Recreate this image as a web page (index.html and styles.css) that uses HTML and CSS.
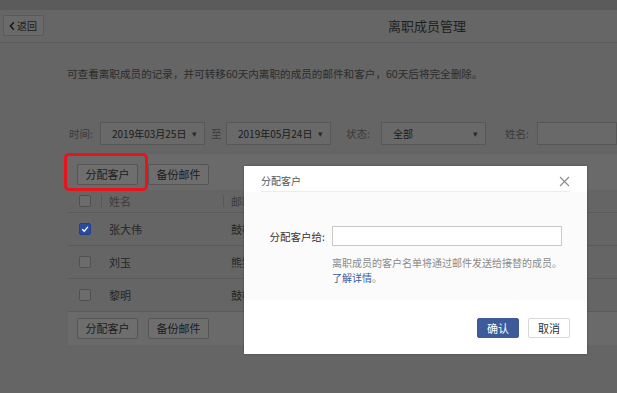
FILE: index.html
```html
<!DOCTYPE html>
<html lang="zh">
<head>
<meta charset="utf-8">
<title>离职成员管理</title>
<link rel="stylesheet" href="styles.css">
</head>
<body>
<div class="page">
  <div class="topstrip"></div>
  <header class="header">
    <button class="back"><svg class="chev" viewBox="0 0 6 10" width="6" height="10"><path d="M4.8 1.2 1.5 5 4.8 8.8" fill="none" stroke="#1a1a1a" stroke-width="1.6"/></svg>返回</button>
    <h1 class="title">离职成员管理</h1>
  </header>
  <main class="content">
    <p class="desc">可查看离职成员的记录，并可转移60天内离职的成员的邮件和客户，60天后将完全删除。</p>
    <div class="filters">
      <span class="flabel">时间:</span>
      <div class="select sel-date"><span>2019年03月25日</span><span class="caret">&#x25BE;</span></div>
      <span class="to">至</span>
      <div class="select sel-date"><span>2019年05月24日</span><span class="caret">&#x25BE;</span></div>
      <span class="flabel status">状态:</span>
      <div class="select sel-status"><span>全部</span><span class="caret">&#x25BE;</span></div>
      <span class="flabel name">姓名:</span>
      <div class="name-input"></div>
    </div>
    <section class="grid">
      <div class="toolbar top">
        <button class="btn">分配客户</button>
        <button class="btn">备份邮件</button>
        <div class="highlight"></div>
      </div>
      <div class="row head">
        <div class="c-check"><span class="cb"></span></div>
        <div class="c-name"><span class="sep"></span>姓名</div>
        <div class="c-dept"><span class="sep"></span>邮箱</div>
      </div>
      <div class="row">
        <div class="c-check"><span class="cb checked"><svg viewBox="0 0 12 12" width="12" height="12"><path d="M3.2 6.3 5.2 8.3 8.9 3.9" fill="none" stroke="#fff" stroke-width="1.4"/></svg></span></div>
        <div class="c-name">张大伟</div>
        <div class="c-dept">鼓楼区</div>
      </div>
      <div class="row">
        <div class="c-check"><span class="cb"></span></div>
        <div class="c-name">刘玉</div>
        <div class="c-dept">熊猫</div>
      </div>
      <div class="row">
        <div class="c-check"><span class="cb"></span></div>
        <div class="c-name">黎明</div>
        <div class="c-dept">鼓楼区</div>
      </div>
      <div class="toolbar bottom">
        <button class="btn">分配客户</button>
        <button class="btn">备份邮件</button>
      </div>
    </section>
  </main>

  <div class="dialog">
    <div class="d-head">
      <span class="d-title">分配客户</span>
      <svg class="close" viewBox="0 0 11 11" width="11" height="11"><path d="M1 1 10 10M10 1 1 10" stroke="#8a8a8a" stroke-width="1.1" fill="none"/></svg>
    </div>
    <div class="d-body">
      <div class="d-row">
        <label class="d-label">分配客户给:</label>
        <div class="d-input"></div>
      </div>
      <p class="d-help">离职成员的客户名单将通过邮件发送给接替的成员。<br><a class="link">了解详情</a>。</p>
    </div>
    <div class="d-foot">
      <button class="dbtn primary">确认</button>
      <button class="dbtn">取消</button>
    </div>
  </div>
</div>
</body>
</html>
```

FILE: styles.css
```css
* { box-sizing: border-box; }
html, body { margin: 0; padding: 0; }
body {
  width: 617px;
  height: 393px;
  overflow: hidden;
  background: #656565;
  font-family: "Noto Sans CJK SC", "Noto Sans", sans-serif;
  color: #1e1e1e;
}
.page { position: relative; width: 617px; height: 393px; }
.topstrip { height: 10px; background: #5b5b5b; }
.header {
  height: 33px;
  display: flex;
  align-items: center;
  border-bottom: 1px solid #5a5a5a;
  background: #666;
}
.back {
  margin-left: 3px;
  margin-top: -1px;
  width: 41px;
  height: 21px;
  padding: 0 0 0 5px;
  display: flex;
  align-items: center;
  background: #6a6a6a;
  border: 1px solid #5a5a5a;
  border-radius: 2px;
  font: 10px/1 "Noto Sans CJK SC", sans-serif;
  color: #1a1a1a;
}
.chev { margin-right: 2px; }
.title {
  margin: 0 0 0 344px;
  font-size: 13px;
  font-weight: 400;
  color: #1e1e1e;
  line-height: 18px;
}
.content { padding-left: 67px; }
.desc {
  margin: 23px 0 0;
  font-size: 10.6px;
  line-height: 16px;
  color: #2c2c2c;
}
.filters {
  margin-top: 40px;
  height: 23px;
  display: flex;
  align-items: center;
  font-size: 10.5px;
  color: #3a3a3a;
}
.flabel { margin-left: 2px; width: 31px; }
.flabel.status { margin-left: 15px; width: 35px; }
.flabel.name { margin-left: 19px; width: 32px; }
.select {
  height: 23px;
  display: flex;
  align-items: center;
  justify-content: space-between;
  border: 1px solid #575757;
  background: #696969;
  color: #1a1a1a;
  padding: 0 7px 0 11px;
  font-size: 10px;
}
.sel-date { width: 105px; }
.sel-status { width: 105px; }
.caret { font-size: 9px; color: #2a2a2a; }
.to { margin: 0 6px; width: 9px; color: #3a3a3a; }
.name-input {
  flex: 1;
  height: 23px;
  border: 1px solid #575757;
  background: #696969;
}
.grid { margin-left: 1px; margin-top: 9px; }
.toolbar {
  position: relative;
  background: #6a6a6a;
  display: flex;
  gap: 10px;
  padding-left: 9px;
}
.toolbar.top { height: 36px; padding-top: 10px; }
.toolbar.bottom { height: 33px; padding-top: 6px; }
.btn {
  width: 61px;
  height: 21px;
  background: #6e6e6e;
  border: 1px solid #555;
  border-radius: 2px;
  font: 11px/1 "Noto Sans CJK SC", sans-serif;
  color: #1c1c1c;
  padding: 0;
}
.highlight {
  position: absolute;
  left: -4px;
  top: -1px;
  width: 84px;
  height: 38px;
  border: 3px solid #e8141c;
  border-radius: 5px;
}
.row {
  height: 33px;
  display: flex;
  align-items: center;
  border-bottom: 1px solid #5a5a5a;
  font-size: 11px;
  color: #262626;
}
.row.head { height: 23px; color: #3c3c3c; }
.c-check { width: 33px; padding-left: 11px; display: flex; }
.c-name { width: 122px; position: relative; padding-left: 8px; }
.c-dept { position: relative; padding-left: 8px; }
.sep {
  position: absolute;
  left: 0;
  top: 50%;
  margin-top: -6px;
  height: 12px;
  border-left: 1px solid #585858;
}
.cb {
  width: 12px;
  height: 12px;
  border: 1px solid #505050;
  border-radius: 2px;
  background: #6c6c6c;
  display: flex;
}
.cb.checked { background: #2a4b9e; border-color: #22408a; }
.cb svg { margin: -1px; }

.dialog {
  position: absolute;
  left: 244px;
  top: 166px;
  width: 343px;
  height: 188px;
  background: #fff;
  box-shadow: 0 0 2px rgba(0,0,0,0.35);
}
.d-head {
  margin: 0 17px;
  height: 26px;
  border-bottom: 1px solid #ececec;
  display: flex;
  justify-content: space-between;
  align-items: flex-start;
  padding-top: 6px;
}
.d-title { font-size: 10px; line-height: 18px; color: #555; }
.close { margin-top: 4px; margin-right: 0; }
.d-body {
  height: 108px;
  background: #fbfbfb;
  padding-top: 34px;
}
.d-row { display: flex; align-items: center; padding-left: 23px; }
.d-label { width: 65px; padding-right: 7px; text-align: right; font-size: 10.5px; color: #333; white-space: nowrap; }
.d-input { width: 230px; height: 20px; border: 1px solid #c9c9c9; background: #fff; }
.d-help {
  margin: 9px 0 0 88px;
  font-size: 10px;
  line-height: 15px;
  color: #8a8a8a;
}
.link { color: #3d5a99; }
.d-foot {
  display: flex;
  justify-content: flex-end;
  gap: 9px;
  padding: 18px 17px 0 0;
}
.dbtn {
  width: 42px;
  height: 20px;
  padding: 0;
  border: 1px solid #d8d8d8;
  border-radius: 2px;
  background: #fff;
  font: 11px/1 "Noto Sans CJK SC", sans-serif;
  color: #333;
}
.dbtn.primary { background: #3d5a99; border-color: #3d5a99; color: #fff; }
```
